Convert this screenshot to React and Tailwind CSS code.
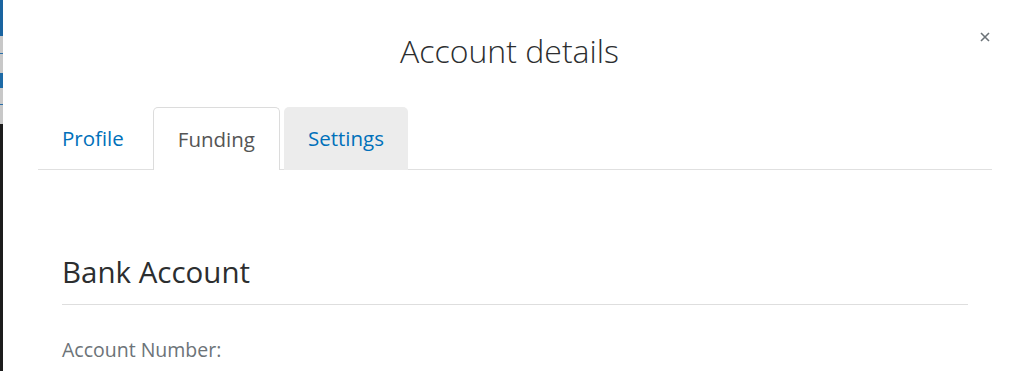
import React, { useState } from 'react';

const tabs = ['Profile', 'Funding', 'Settings'];

const AccountDetails = () => {
    const [active, setActive] = useState('Funding');

    return (
        <div className="flex h-[371px] overflow-hidden bg-white font-['Open_Sans',_sans-serif]">
            {/* Sliver of the page behind the modal */}
            <div className="flex w-[3px] shrink-0 flex-col">
                <div className="h-[36px] bg-[#1a64a0]" />
                <div className="h-[17px] bg-[#c8c8c8]" />
                <div className="h-[1px] bg-[#2a6fa8]" />
                <div className="h-[19px] bg-[#c8c8c8]" />
                <div className="h-[15px] bg-[#1d6aa6]" />
                <div className="h-[16px] bg-[#c8c8c8]" />
                <div className="h-[1px] bg-[#2a6fa8]" />
                <div className="h-[19px] bg-[#c8c8c8]" />
                <div className="flex-1 bg-[#1c1c1c]" />
            </div>

            <div className="relative flex-1">
                <button className="absolute right-[34px] top-[32px] text-[#6c7378]" title="Close">
                    <svg width="10" height="10" viewBox="0 0 10 10" stroke="currentColor" strokeWidth="1.6">
                        <path d="M1 1 L9 9 M9 1 L1 9" />
                    </svg>
                </button>

                <h2 className="pt-[31px] pr-[8px] text-center text-[32px] font-light leading-[40px] text-[#2c2e2f]">
                    Account details
                </h2>

                <div className="ml-[35px] mr-[32px] mt-[36px]">
                    {/* Tabs */}
                    <div className="flex gap-[4px] border-b border-[#e0e0e0]">
                        {tabs.map(tab => (
                            <button
                                key={tab}
                                onClick={() => setActive(tab)}
                                className={`-mb-px h-[63px] rounded-t-[5px] px-[24px] text-[20.5px] ${
                                    active === tab
                                        ? 'border border-b-0 border-[#dcdcdc] bg-white text-[#555]'
                                        : tab === 'Profile'
                                            ? 'pr-[25px] text-[#0070ba]'
                                            : 'bg-[#ececec] text-[#0070ba]'
                                }`}
                            >
                                {tab}
                            </button>
                        ))}
                    </div>

                    {/* Funding panel */}
                    <section className="px-[24px] pt-[85px]">
                        <h3 className="border-b border-[#dedede] pb-[15px] text-[29.5px] font-medium leading-[34px] text-[#2c2e2f]">
                            Bank Account
                        </h3>
                        <p className="pt-[30px] text-[19.5px] text-[#6c7378]">Account Number:</p>
                    </section>
                </div>
            </div>
        </div>
    );
};

export default AccountDetails;
